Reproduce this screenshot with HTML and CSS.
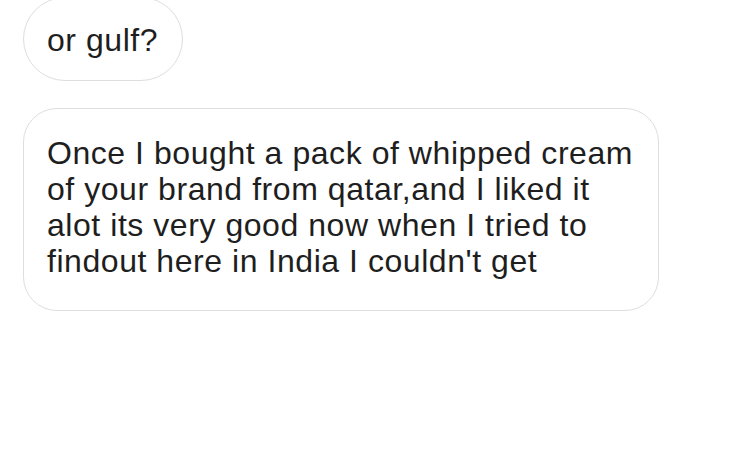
FILE: index.html
```html
<!DOCTYPE html>
<html lang="en">
<head>
    <meta charset="UTF-8">
    <title>Chat</title>
    <link rel="stylesheet" href="styles.css">
</head>
<body>
    <div class="thread">
        <div class="bubble short">or gulf?</div>
        <div class="bubble long">Once I bought a pack of whipped cream<br>of your brand from qatar,and I liked it<br>alot its very good now when I tried to<br>findout here in India I couldn't get</div>
    </div>
</body>
</html>
```

FILE: styles.css
```css
body {
    margin: 0;
    background: #fff;
    font-family: 'Liberation Sans', Arial, sans-serif;
    color: #1e1e1e;
}
.thread {
    display: flex;
    flex-direction: column;
    align-items: flex-start;
    gap: 27px;
    padding: 0 23px;
    margin-top: -3px;
}
.bubble {
    border: 1.5px solid #dedede;
    background: #fff;
    font-size: 32px;
    line-height: 36px;
    letter-spacing: 0.55px;
}
.short {
    height: 84px;
    box-sizing: border-box;
    display: flex;
    align-items: center;
    padding: 2px 24px 0 23px;
    border-radius: 42px;
}
.long {
    width: 636px;
    height: 203px;
    box-sizing: border-box;
    padding: 26px 23px 25px;
    border-radius: 34px;
}
```
